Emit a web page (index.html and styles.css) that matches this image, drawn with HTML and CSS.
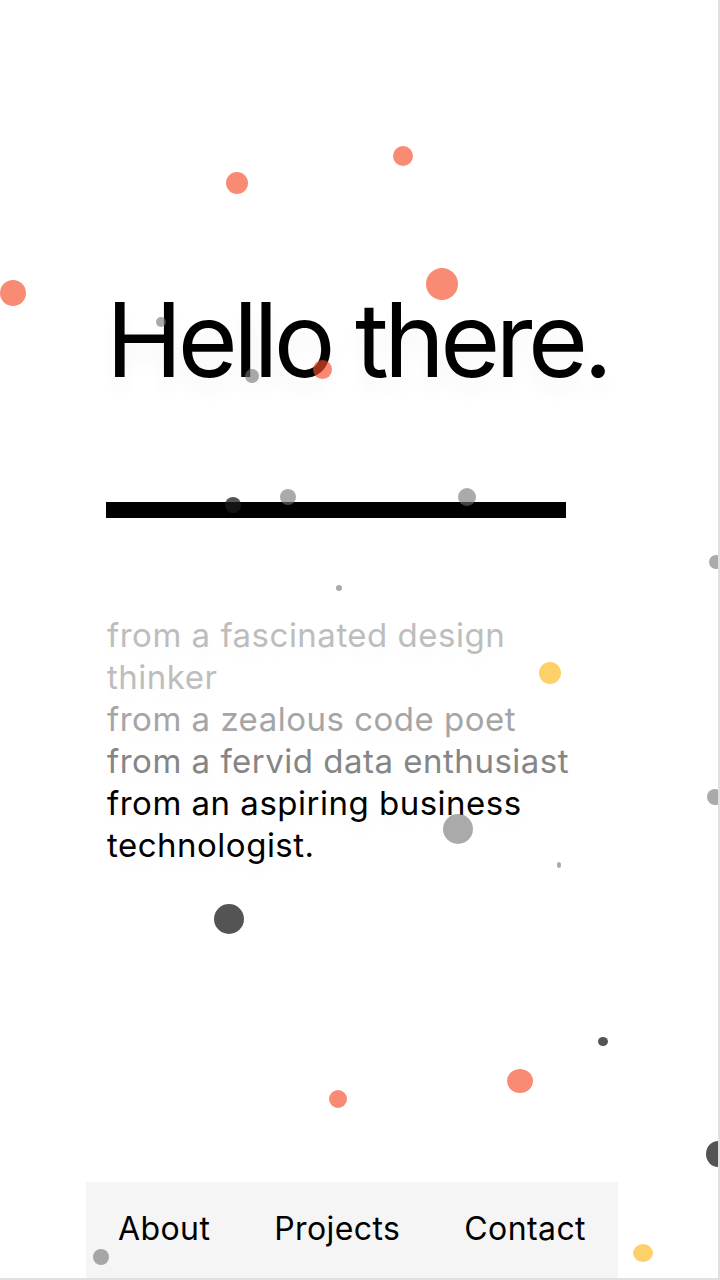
FILE: index.html
```html
<!DOCTYPE html>
<html lang="en">
<head>
<meta charset="utf-8">
<title>Hello there.</title>
<link rel="stylesheet" href="styles.css">
</head>
<body>
<div class="page">
  <main class="intro">
    <h1 class="hello">Hello there.</h1>
    <div class="rule"></div>
    <p class="roles">
      <span class="role role-1">from a fascinated design thinker</span>
      <span class="role role-2">from a zealous code poet</span>
      <span class="role role-3">from a fervid data enthusiast</span>
      <span class="role role-4">from an aspiring business technologist.</span>
    </p>
  </main>
  <nav class="nav">
    <a class="nav-link" href="#about">About</a>
    <a class="nav-link" href="#projects">Projects</a>
    <a class="nav-link" href="#contact">Contact</a>
  </nav>
  <div class="dots" aria-hidden="true">
    <span class="dot salmon" style="left:226px;top:172px;width:22px;height:22px"></span>
    <span class="dot salmon" style="left:393px;top:146px;width:20px;height:20px"></span>
    <span class="dot salmon" style="left:0px;top:280px;width:26px;height:26px"></span>
    <span class="dot salmon" style="left:426px;top:268px;width:32px;height:32px"></span>
    <span class="dot salmon" style="left:313px;top:360px;width:19px;height:19px"></span>
    <span class="dot grey" style="left:156px;top:317px;width:10px;height:10px"></span>
    <span class="dot grey" style="left:245px;top:369px;width:14px;height:14px"></span>
    <span class="dot dark" style="left:225px;top:497px;width:16px;height:16px"></span>
    <span class="dot grey" style="left:280px;top:489px;width:16px;height:16px"></span>
    <span class="dot grey" style="left:458px;top:488px;width:18px;height:18px"></span>
    <span class="dot grey" style="left:336px;top:585px;width:6px;height:6px"></span>
    <span class="dot grey" style="left:709px;top:555px;width:14px;height:14px"></span>
    <span class="dot yellow" style="left:539px;top:662px;width:22px;height:22px"></span>
    <span class="dot grey" style="left:443px;top:814px;width:30px;height:30px"></span>
    <span class="dot grey" style="left:707px;top:789px;width:16px;height:16px"></span>
    <span class="dot grey" style="left:557px;top:862px;width:4px;height:6px"></span>
    <span class="dot dark" style="left:214px;top:904px;width:30px;height:30px"></span>
    <span class="dot dark" style="left:598px;top:1037px;width:10px;height:9px"></span>
    <span class="dot salmon" style="left:507px;top:1069px;width:26px;height:24px"></span>
    <span class="dot salmon" style="left:329px;top:1090px;width:18px;height:18px"></span>
    <span class="dot dark" style="left:706px;top:1141px;width:24px;height:26px"></span>
    <span class="dot grey" style="left:93px;top:1249px;width:16px;height:16px"></span>
    <span class="dot yellow" style="left:633px;top:1244px;width:20px;height:18px"></span>
  </div>
</div>
</body>
</html>
```

FILE: styles.css
```css
* { box-sizing: border-box; }

html, body {
  margin: 0;
  padding: 0;
  background: #ffffff;
}

body {
  font-family: Inter, "Helvetica Neue", Arial, sans-serif;
  color: #000;
}

.page {
  position: relative;
  width: 720px;
  height: 1280px;
  overflow: hidden;
  border-right: 2px solid #e0e0e0;
  border-bottom: 2px solid #e0e0e0;
  display: flex;
  flex-direction: column;
}

.intro {
  padding: 284px 0 0 106px;
  flex: 1;
}

.hello {
  margin: 0;
  font-size: 103px;
  font-weight: 400;
  line-height: 112px;
  letter-spacing: -4.7px;
  text-shadow: 0 14px 18px rgba(0, 0, 0, 0.045);
}

.rule {
  margin-top: 106px;
  width: 460px;
  height: 16px;
  background: #000;
}

.roles {
  margin: 96px 0 0 1px;
  width: 480px;
  font-size: 33px;
  line-height: 42px;
  letter-spacing: 0.5px;
  text-shadow: 0 10px 16px rgba(0, 0, 0, 0.035);
}

.role { display: block; }
.role-1 { color: #bdbdbd; }
.role-2 { color: #a5a5a5; }
.role-3 { color: #858585; }
.role-4 { color: #000; }

.nav {
  align-self: flex-start;
  margin-left: 86px;
  height: 96px;
  background: #f5f5f5;
  display: flex;
  align-items: center;
}

.nav-link {
  padding: 0 32px 4px;
  font-size: 32px;
  color: #000;
  text-decoration: none;
  letter-spacing: 0.4px;
}

.dots {
  position: absolute;
  inset: 0;
  pointer-events: none;
}

.dot {
  position: absolute;
  border-radius: 50%;
}

.salmon { background: rgb(246, 77, 41); opacity: 0.65; }
.grey { background: rgb(113, 113, 113); opacity: 0.6; }
.dark { background: rgb(27, 27, 27); opacity: 0.75; }
.yellow { background: rgb(252, 188, 42); opacity: 0.7; }
```
